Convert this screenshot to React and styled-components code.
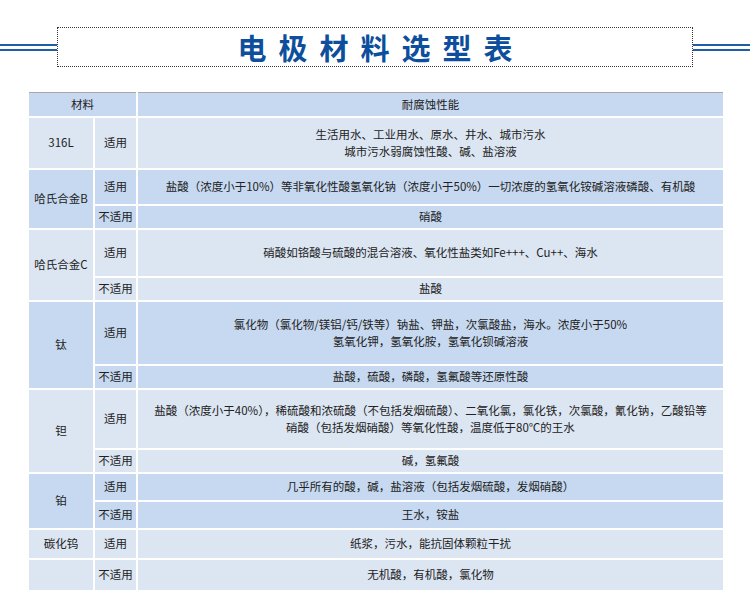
import React from "react";
import styled, { createGlobalStyle } from "styled-components";

const Global = createGlobalStyle`
  body { margin: 0; background: #fff; font-family: "Noto Sans CJK SC", "Liberation Sans", sans-serif; }
`;

const Page = styled.div`
  width: 750px;
  padding-top: 27px;
`;

const TitleRow = styled.div`
  display: flex;
  align-items: center;
  height: 40px;
`;

const Rule = styled.div`
  flex: 1;
  height: 7px;
  border-top: 2px solid #1d5ea8;
  border-bottom: 2px solid #1d5ea8;
  box-sizing: border-box;
`;

const TitleBox = styled.div`
  width: 636px;
  height: 40px;
  box-sizing: border-box;
  border: 1px dotted #333;
  display: flex;
  align-items: center;
  justify-content: center;
  font-size: 29px;
  font-weight: bold;
  letter-spacing: 12px;
  color: #0d4f9c;
  padding-left: 12px;
`;

const Table = styled.table`
  margin: 25px 0 0 27px;
  width: 698px;
  table-layout: fixed;
  border-collapse: collapse;
  border: 1px solid #a9a9a9;
  font-size: 11.5px;
  color: #222;
  td {
    border: 2px solid #fff;
    text-align: center;
    line-height: 17px;
    padding: 0;
    white-space: nowrap;
    overflow: hidden;
  }
  tr:first-child td { border-top: none; }
`;

const Row = styled.tr`
  background: ${p => (p.$dark ? "#c6d9f0" : "#dce6f2")};
  height: ${p => p.$h}px;
`;

const data = [
  { name: "316L", dark: false, rows: [["适用", ["生活用水、工业用水、原水、井水、城市污水", "城市污水弱腐蚀性酸、碱、盐溶液"], 52]] },
  { name: "哈氏合金B", dark: true, rows: [["适用", ["盐酸（浓度小于10%）等非氧化性酸氢氧化钠（浓度小于50%）一切浓度的氢氧化铵碱溶液磷酸、有机酸"], 36], ["不适用", ["硝酸"], 24]] },
  { name: "哈氏合金C", dark: false, rows: [["适用", ["硝酸如铬酸与硫酸的混合溶液、氧化性盐类如Fe+++、Cu++、海水"], 48], ["不适用", ["盐酸"], 24]] },
  { name: "钛", dark: true, rows: [["适用", ["氯化物（氯化物/镁铝/钙/铁等）钠盐、钾盐，次氯酸盐，海水。浓度小于50%", "氢氧化钾，氢氧化胺，氢氧化钡碱溶液"], 64], ["不适用", ["盐酸，硫酸，磷酸，氢氟酸等还原性酸"], 24]] },
  { name: "钽", dark: false, rows: [["适用", ["盐酸（浓度小于40%），稀硫酸和浓硫酸（不包括发烟硫酸）、二氧化氯，氯化铁，次氯酸，氰化钠，乙酸铅等", "硝酸（包括发烟硝酸）等氧化性酸，温度低于80℃的王水"], 60], ["不适用", ["碱，氢氟酸"], 24]] },
  { name: "铂", dark: true, rows: [["适用", ["几乎所有的酸，碱，盐溶液（包括发烟硫酸，发烟硝酸）"], 28], ["不适用", ["王水，铵盐"], 28]] },
];

export default function App() {
  return (
    <Page>
      <Global />
      <TitleRow>
        <Rule />
        <TitleBox>电极材料选型表</TitleBox>
        <Rule />
      </TitleRow>
      <Table>
        <colgroup>
          <col style={{ width: 66 }} />
          <col style={{ width: 43 }} />
          <col />
        </colgroup>
        <tbody>
          <Row $dark $h={24}>
            <td colSpan={2}>材料</td>
            <td>耐腐蚀性能</td>
          </Row>
          {data.map(m =>
            m.rows.map((r, i) => (
              <Row key={m.name + i} $dark={m.dark} $h={r[2]}>
                {i === 0 && <td rowSpan={m.rows.length}>{m.name}</td>}
                <td>{r[0]}</td>
                <td>{r[1].map((l, j) => <div key={j}>{l}</div>)}</td>
              </Row>
            ))
          )}
          <Row $h={30}>
            <td>碳化钨</td>
            <td>适用</td>
            <td>纸浆，污水，能抗固体颗粒干扰</td>
          </Row>
          <Row $h={32}>
            <td></td>
            <td>不适用</td>
            <td>无机酸，有机酸，氯化物</td>
          </Row>
        </tbody>
      </Table>
    </Page>
  );
}
